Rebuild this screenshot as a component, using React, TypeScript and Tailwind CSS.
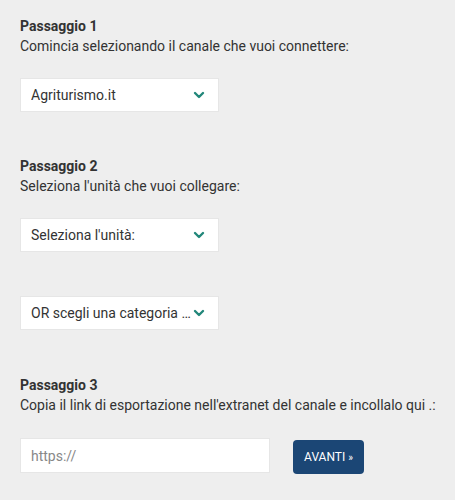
import React, { useState } from 'react';

const Chevron = () => (
    <svg className="w-3 h-3 text-[#22877a] shrink-0" viewBox="0 0 12 12" fill="none" stroke="currentColor" strokeWidth="2.4" strokeLinecap="round" strokeLinejoin="round">
        <path d="M2 4l4 4 4-4" />
    </svg>
);

const FakeSelect: React.FC<{ label: string }> = ({ label }) => (
    <div className="w-[199px] h-[34px] bg-white border border-[#e6e6e6] flex items-center justify-between pl-[10px] pr-[13px] gap-[2px]">
        <span className="truncate text-[14px] text-[#333]">{label}</span>
        <Chevron />
    </div>
);

const Step: React.FC<{ title: string; text: string }> = ({ title, text }) => (
    <div className="leading-[20px] text-[14px] text-[#333]">
        <div className="font-bold">{title}</div>
        <div>{text}</div>
    </div>
);

export default function App() {
    const [url, setUrl] = useState('');

    return (
        <div className="min-h-[500px] bg-[#eeeeee] pl-[20px] pt-[16px] font-['Roboto',sans-serif]">
            <Step title="Passaggio 1" text="Comincia selezionando il canale che vuoi connettere:" />
            <div className="mt-[22px]">
                <FakeSelect label="Agriturismo.it" />
            </div>

            <div className="mt-[44px]">
                <Step title="Passaggio 2" text="Seleziona l'unità che vuoi collegare:" />
            </div>
            <div className="mt-[22px]">
                <FakeSelect label="Seleziona l'unità:" />
            </div>
            <div className="mt-[44px]">
                <FakeSelect label="OR scegli una categoria di unità" />
            </div>

            <div className="mt-[45px]">
                <Step title="Passaggio 3" text="Copia il link di esportazione nell'extranet del canale e incollalo qui .:" />
            </div>
            <div className="mt-[23px] flex items-start gap-[23px]">
                <input
                    className="w-[250px] h-[35px] bg-white border border-[#e6e6e6] px-[10px] text-[14px] text-[#333] placeholder-[#888] outline-none"
                    placeholder="https://"
                    value={url}
                    onChange={(e) => setUrl(e.target.value)}
                />
                <button className="h-[34px] w-[71px] mt-[2px] rounded-[4px] bg-[#1b4675] text-white text-[12px] uppercase flex items-center justify-center gap-[3px]">
                    <span>Avanti</span>
                    <span className="text-[10px]">»</span>
                </button>
            </div>
        </div>
    );
}
